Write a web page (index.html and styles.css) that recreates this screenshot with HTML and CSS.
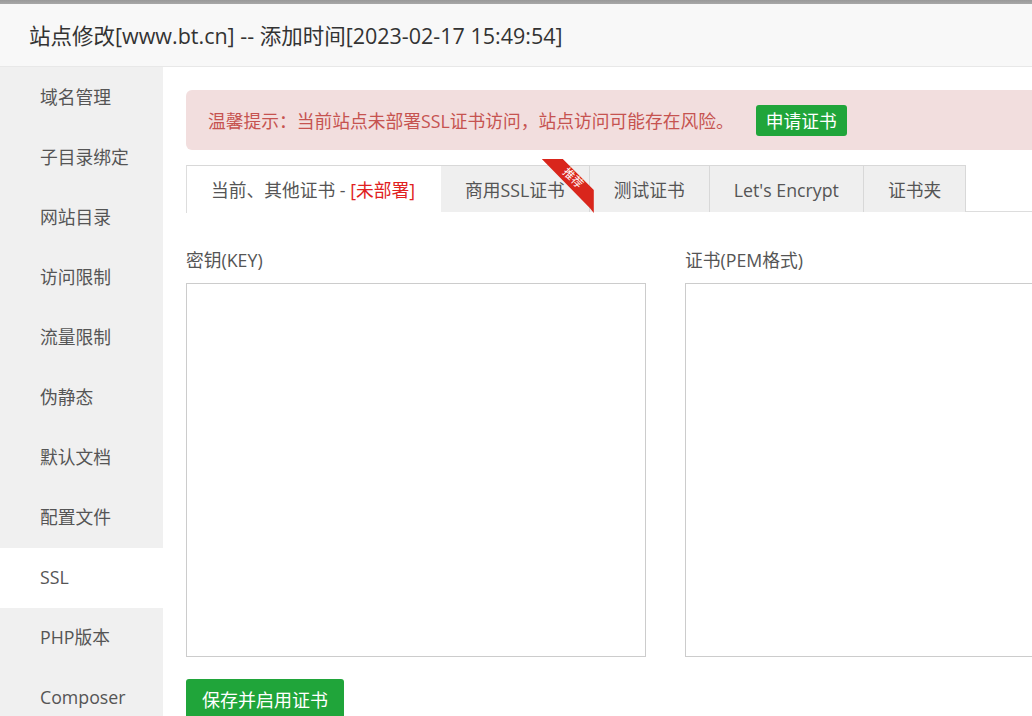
FILE: index.html
```html
<!DOCTYPE html>
<html lang="zh-CN">
<head>
<meta charset="utf-8">
<title>站点修改</title>
<link rel="stylesheet" href="styles.css">
</head>
<body>
<div class="topline"></div>
<div class="header">站点修改[www.bt.cn] -- 添加时间[2023-02-17 15:49:54]</div>
<div class="main">
  <ul class="sidebar">
    <li>域名管理</li>
    <li>子目录绑定</li>
    <li>网站目录</li>
    <li>访问限制</li>
    <li>流量限制</li>
    <li>伪静态</li>
    <li>默认文档</li>
    <li>配置文件</li>
    <li class="active">SSL</li>
    <li>PHP版本</li>
    <li>Composer</li>
  </ul>
  <div class="content">
    <div class="alert">
      <span>温馨提示：当前站点未部署SSL证书访问，站点访问可能存在风险。</span>
      <button class="btn btn-sm">申请证书</button>
    </div>
    <div class="tabs">
      <div class="tab active">当前、其他证书 - <span class="red">[未部署]</span></div>
      <div class="tab">商用SSL证书<div class="ribbon"><span>推荐</span></div></div>
      <div class="tab">测试证书</div>
      <div class="tab">Let's Encrypt</div>
      <div class="tab">证书夹</div>
    </div>
    <div class="form">
      <div class="field">
        <div class="label">密钥(KEY)</div>
        <textarea class="box"></textarea>
      </div>
      <div class="field">
        <div class="label">证书(PEM格式)</div>
        <textarea class="box"></textarea>
      </div>
    </div>
    <button class="btn btn-save">保存并启用证书</button>
  </div>
</div>
</body>
</html>
```

FILE: styles.css
```css
html, body {
  margin: 0;
  padding: 0;
}
body {
  width: 1032px;
  height: 716px;
  overflow: hidden;
  background: #fff;
  font-family: "Open Sans", "Noto Sans CJK SC", sans-serif;
  color: #555;
}
.topline {
  height: 4px;
  background: linear-gradient(#9a9a9a, #a8a8a8);
}
.header {
  height: 62px;
  line-height: 64px;
  padding-left: 29px;
  font-size: 21.5px;
  color: #333;
  background: #f8f8f8;
  border-bottom: 1px solid #e8e8e8;
  white-space: nowrap;
}
.main {
  display: flex;
  height: 649px;
  overflow: hidden;
}
.sidebar {
  list-style: none;
  margin: 0;
  padding: 1px 0 0;
  width: 163px;
  flex: none;
  background: #f0f0f0;
}
.sidebar li {
  height: 60px;
  line-height: 58px;
  padding-left: 40px;
  font-size: 17.75px;
  color: #555;
}
.sidebar li.active {
  background: #fff;
}
.content {
  flex: none;
  width: 1000px;
  padding: 23px 0 0 23px;
}
.alert {
  display: flex;
  align-items: center;
  height: 60px;
  padding-left: 22px;
  background: #f2dede;
  color: #c65350;
  border-radius: 6px;
  font-size: 17.75px;
}
.btn {
  border: none;
  background: #20a53a;
  color: #fff;
  font-family: inherit;
  border-radius: 3px;
  cursor: pointer;
}
.btn-sm {
  margin-left: 22px;
  height: 31px;
  padding: 0 10px;
  font-size: 17.75px;
}
.tabs {
  display: flex;
  margin-top: 15px;
  height: 46px;
  border-bottom: 1px solid #ddd;
}
.tab {
  position: relative;
  height: 46px;
  line-height: 48px;
  padding: 0 24px;
  font-size: 17.75px;
  color: #555;
  background: #efefef;
  border: 1px solid #d8d8d8;
  border-left: none;
  border-bottom: none;
  white-space: nowrap;
}
.tab.active {
  background: #fff;
  border-left: 1px solid #ddd;
  border-right: none;
  height: 47px;
  padding-right: 26px;
}
.red {
  color: #e02020;
}
.ribbon {
  position: absolute;
  right: -5px;
  top: -7px;
  width: 52px;
  height: 54px;
  background: #d9261c;
  clip-path: polygon(0 0, 21px 0, 52px 31px, 52px 54px, 48px 49px);
  z-index: 2;
}
.ribbon span {
  position: absolute;
  left: 31px;
  top: 19px;
  transform: translate(-50%, -50%) rotate(45deg);
  font-size: 11.5px;
  line-height: 12px;
  color: #fff;
}
.form {
  display: flex;
  gap: 39px;
  margin-top: 38px;
}
.field {
  display: flex;
  flex-direction: column;
}
.label {
  height: 20px;
  line-height: 20px;
  font-size: 17.75px;
  color: #555;
  margin-bottom: 13px;
}
.box {
  width: 460px;
  height: 374px;
  box-sizing: border-box;
  border: 1px solid #ccc;
  resize: none;
  margin: 0;
  padding: 0;
  background: #fff;
}
.btn-save {
  display: block;
  margin-top: 22px;
  height: 40px;
  width: 158px;
  font-size: 18px;
  border-radius: 3px;
}
```
